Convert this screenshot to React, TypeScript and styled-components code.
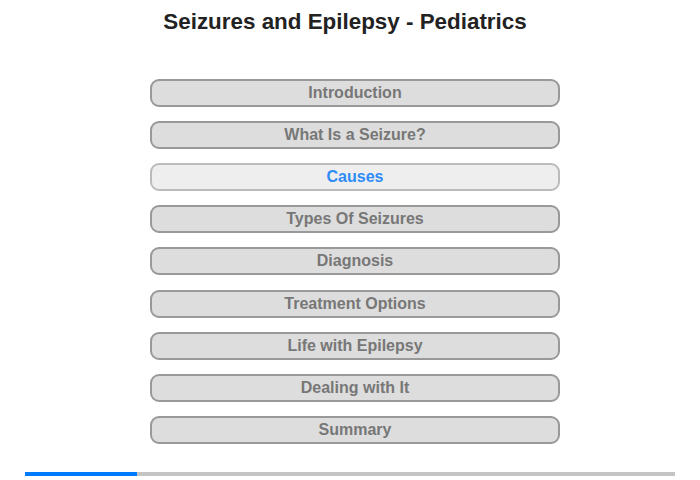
import React from "react";
import styled, { createGlobalStyle, css } from "styled-components";

const SECTIONS = [
  "Introduction",
  "What Is a Seizure?",
  "Causes",
  "Types Of Seizures",
  "Diagnosis",
  "Treatment Options",
  "Life with Epilepsy",
  "Dealing with It",
  "Summary",
];

const ACTIVE = 2;
const PROGRESS = 112 / 650;

export default function App() {
  return (
    <>
      <GlobalStyle />
      <Page>
        <Title>Seizures and Epilepsy - Pediatrics</Title>
        <Menu>
          {SECTIONS.map((label, i) => (
            <MenuButton key={label} active={i === ACTIVE}>
              {label}
            </MenuButton>
          ))}
        </Menu>
        <Progress>
          <ProgressFill style={{ width: `${PROGRESS * 100}%` }} />
        </Progress>
      </Page>
    </>
  );
}

const GlobalStyle = createGlobalStyle`
  body {
    margin: 0;
    background: #fff;
    font-family: "Liberation Sans", Arial, sans-serif;
  }
`;

const Page = styled.div`
  width: 700px;
  height: 480px;
  display: flex;
  flex-direction: column;
`;

const Title = styled.h1`
  margin: 0;
  padding: 9px 10px 0 0;
  height: 68px;
  box-sizing: border-box;
  text-align: center;
  font-size: 22.4px;
  font-weight: bold;
  color: #222;
`;

const Menu = styled.div`
  margin: 11px 0 0 150px;
  width: 410px;
  display: flex;
  flex-direction: column;
  gap: 14.11px;
`;

const MenuButton = styled.div<{ active?: boolean }>`
  height: 28px;
  box-sizing: border-box;
  border: 2px solid #999;
  border-radius: 9px;
  background: #ddd;
  color: #777;
  font-size: 16px;
  font-weight: bold;
  display: flex;
  align-items: center;
  justify-content: center;
  ${({ active }) =>
    active &&
    css`
      background: #eee;
      border-color: #bbb;
      color: #2f8cf7;
    `}
`;

const Progress = styled.div`
  margin: 28px 25px 0;
  height: 4px;
  background: #c4c4c4;
`;

const ProgressFill = styled.div`
  height: 100%;
  background: #007bff;
`;
